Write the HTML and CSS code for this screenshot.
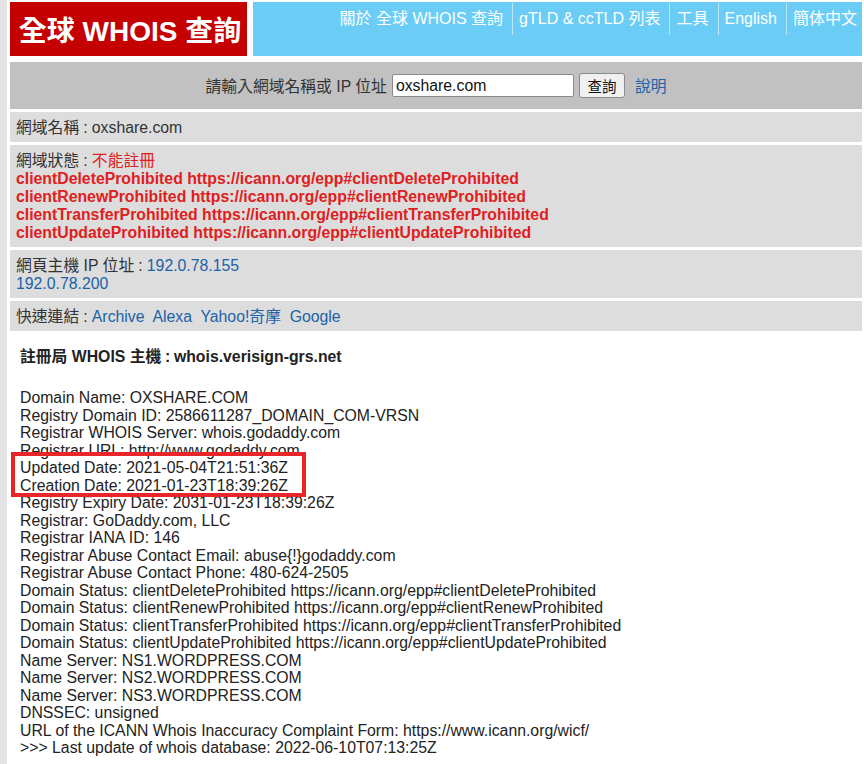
FILE: index.html
```html
<!DOCTYPE html>
<html lang="zh-Hant">
<head>
<meta charset="utf-8">
<title>全球 WHOIS 查詢</title>
<link rel="stylesheet" href="styles.css">
</head>
<body>
<div class="page">
  <header class="header">
    <div class="logo">全球 WHOIS 查詢</div>
    <nav class="nav">
      <a class="nav-item" href="#">關於 全球 WHOIS 查詢</a>
      <a class="nav-item" href="#">gTLD &amp; ccTLD 列表</a>
      <a class="nav-item" href="#">工具</a>
      <a class="nav-item" href="#">English</a>
      <a class="nav-item" href="#">簡体中文</a>
    </nav>
  </header>

  <form class="search">
    <label class="search-label">請輸入網域名稱或 IP 位址</label>
    <input class="search-input" type="text" value="oxshare.com">
    <button class="search-btn" type="button">查詢</button>
    <a class="link help" href="#">說明</a>
  </form>

  <div class="row">網域名稱<span class="colon">:</span>oxshare.com</div>
  <div class="row">網域狀態<span class="colon">:</span><span class="red">不能註冊</span><br>
    <span class="red bold">clientDeleteProhibited https://icann.org/epp#clientDeleteProhibited</span><br>
    <span class="red bold">clientRenewProhibited https://icann.org/epp#clientRenewProhibited</span><br>
    <span class="red bold">clientTransferProhibited https://icann.org/epp#clientTransferProhibited</span><br>
    <span class="red bold">clientUpdateProhibited https://icann.org/epp#clientUpdateProhibited</span>
  </div>
  <div class="row">網頁主機 IP 位址<span class="colon">:</span><a class="link" href="#">192.0.78.155</a><br><a class="link" href="#">192.0.78.200</a></div>
  <div class="row">快速連結<span class="colon">:</span><a class="link" href="#">Archive</a>&nbsp; <a class="link" href="#">Alexa</a>&nbsp; <a class="link" href="#">Yahoo!奇摩</a>&nbsp; <a class="link" href="#">Google</a></div>

  <section class="whois">
    <div class="whois-title">註冊局 WHOIS 主機<span class="colon">:</span>whois.verisign-grs.net</div>
    <div class="whois-body">
      <div>Domain Name: OXSHARE.COM</div>
      <div>Registry Domain ID: 2586611287_DOMAIN_COM-VRSN</div>
      <div>Registrar WHOIS Server: whois.godaddy.com</div>
      <div>Registrar URL: http://www.godaddy.com</div>
      <div class="highlight">
        <div>Updated Date: 2021-05-04T21:51:36Z</div>
        <div>Creation Date: 2021-01-23T18:39:26Z</div>
      </div>
      <div>Registry Expiry Date: 2031-01-23T18:39:26Z</div>
      <div>Registrar: GoDaddy.com, LLC</div>
      <div>Registrar IANA ID: 146</div>
      <div>Registrar Abuse Contact Email: abuse{!}godaddy.com</div>
      <div>Registrar Abuse Contact Phone: 480-624-2505</div>
      <div>Domain Status: clientDeleteProhibited https://icann.org/epp#clientDeleteProhibited</div>
      <div>Domain Status: clientRenewProhibited https://icann.org/epp#clientRenewProhibited</div>
      <div>Domain Status: clientTransferProhibited https://icann.org/epp#clientTransferProhibited</div>
      <div>Domain Status: clientUpdateProhibited https://icann.org/epp#clientUpdateProhibited</div>
      <div>Name Server: NS1.WORDPRESS.COM</div>
      <div>Name Server: NS2.WORDPRESS.COM</div>
      <div>Name Server: NS3.WORDPRESS.COM</div>
      <div>DNSSEC: unsigned</div>
      <div>URL of the ICANN Whois Inaccuracy Complaint Form: https://www.icann.org/wicf/</div>
      <div>&gt;&gt;&gt; Last update of whois database: 2022-06-10T07:13:25Z</div>
    </div>
  </section>
</div>
</body>
</html>
```
FILE: styles.css
```css
html, body {
  margin: 0;
  padding: 0;
  background: #ffffff;
}
body {
  font-family: "Liberation Sans", Arial, "Noto Sans CJK TC", sans-serif;
  font-size: 15.8px;
  color: #222222;
  border-left: 7px solid #e4e4e4;
  min-height: 764px;
  box-sizing: border-box;
}
.page {
  padding: 2px 2px 0 3px;
}
.header {
  display: flex;
  gap: 6px;
  height: 54px;
}
.logo {
  width: 237px;
  background: #c40000;
  color: #ffffff;
  font-weight: bold;
  font-size: 28px;
  display: flex;
  align-items: center;
  justify-content: center;
  padding-left: 3px;
  box-sizing: border-box;
}
.nav {
  flex: 1;
  background: #6bcdf5;
  display: flex;
  justify-content: flex-end;
  align-items: flex-start;
  padding-top: 1px;
}
.nav-item {
  color: #ffffff;
  text-decoration: none;
  font-size: 16px;
  line-height: 32px;
  padding: 0 9px 0 6px;
}
.nav-item:last-child {
  padding-right: 5px;
}
.nav-item + .nav-item {
  border-left: 1px solid rgba(255, 255, 255, 0.55);
}
.search {
  margin: 6px 0 0;
  height: 47px;
  background: #c1c1c1;
  display: flex;
  align-items: center;
  justify-content: center;
  gap: 5px;
  color: #333333;
}
.search-input {
  width: 174px;
  height: 21px;
  border: 1px solid #8a8a8a;
  border-radius: 2px;
  padding: 0 3px;
  font: inherit;
  color: #111;
  margin: 0;
}
.search-btn {
  width: 46px;
  height: 25px;
  padding: 0;
  border: 1px solid #8c8c8c;
  border-radius: 3px;
  background: #f0f0f0;
  font: inherit;
  font-size: 14.5px;
  color: #111;
  margin: 0 5px 0 0;
}
.link {
  color: #2062a8;
  text-decoration: none;
}
.colon {
  display: inline-block;
  width: 0.8em;
  text-align: center;
}
.row {
  margin-top: 3px;
  background: #dddddd;
  padding: 7px 6px 5px;
  line-height: 18px;
  color: #333333;
}
.red {
  color: #e02020;
}
.bold {
  font-weight: bold;
}
.whois {
  padding: 17px 10px 16px;
  color: #222222;
}
.whois-title {
  font-weight: bold;
  line-height: 18px;
  margin-bottom: 23px;
}
.whois-body {
  line-height: 17.5px;
}
.highlight {
  position: relative;
}
.highlight::after {
  content: "";
  position: absolute;
  left: -9px;
  top: -7px;
  width: 295px;
  height: 45px;
  border: 4px solid #e8262a;
  box-sizing: border-box;
}
```
